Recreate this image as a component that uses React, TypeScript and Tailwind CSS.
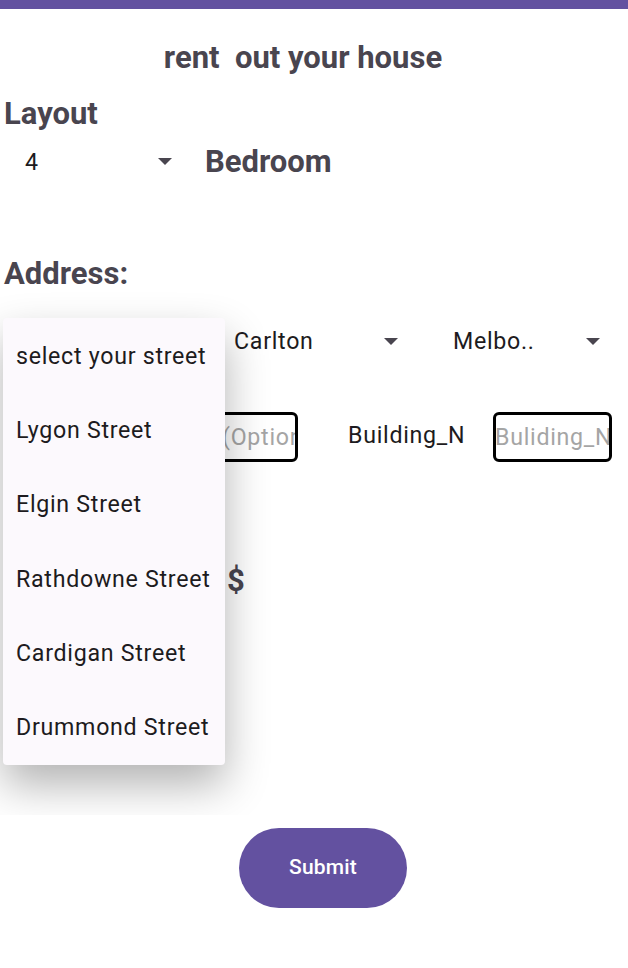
import React from "react";

const Caret = ({ className = "" }: { className?: string }) => (
  <svg width="14" height="8" viewBox="0 0 14 8" className={className}>
    <path d="M0 0 L14 0 L7 7 Z" fill="#49454F" />
  </svg>
);

export default function App() {
  const streets = [
    "select your street",
    "Lygon Street",
    "Elgin Street",
    "Rathdowne Street",
    "Cardigan Street",
    "Drummond Street",
  ];
  const body = "text-[23.2px] tracking-[0.72px] text-[#1D1B20] leading-none whitespace-nowrap";
  return (
    <div
      className="relative w-[628px] h-[968px] bg-white overflow-hidden text-[#49454F]"
      style={{ fontFamily: "Roboto, 'Noto Sans', sans-serif" }}
    >
      <div className="h-[9px] bg-[#6351A0]" />
      <div className="h-[96px] flex items-center justify-center pr-[22px]">
        <h1 className="text-[31px] font-bold whitespace-pre leading-none">rent  out your house</h1>
      </div>
      <div className="pl-[4px] h-[16px] flex items-center">
        <span className="text-[31px] font-bold leading-none">Layout</span>
      </div>
      <div className="h-[83px] flex items-center">
        <div className="w-[200px] flex items-center pl-[25px] pr-[28px] justify-between">
          <span className={body}>4</span>
          <Caret />
        </div>
        <span className="text-[31px] font-bold leading-none ml-[5px] -mt-[2px]">Bedroom</span>
      </div>
      <div className="h-[49px]" />
      <div className="pl-[4px] h-[40px] flex items-center">
        <span className="text-[31px] font-bold leading-none">Address:</span>
      </div>
      <div className="h-[98px] flex items-center">
        <div className="w-[234px]" />
        <div className="w-[219px] flex items-center justify-between pr-[55px]">
          <span className={body}>Carlton</span>
          <Caret />
        </div>
        <div className="w-[175px] flex items-center justify-between pr-[28px]">
          <span className={body}>Melbo..</span>
          <Caret />
        </div>
      </div>
      <div className="h-[92px] flex items-center">
        <div className="w-[216px]" />
        <div className="w-[82px] h-[50px] border-[3px] border-black rounded-[6px] flex items-center pl-[3px] overflow-hidden">
          <span className="text-[23.2px] tracking-[0.72px] text-[#A5A5A5] whitespace-nowrap leading-normal">(Optional)</span>
        </div>
        <div className="ml-[50px] w-[145px]">
          <span className={body}>Building_N</span>
        </div>
        <div className="w-[119px] h-[50px] border-[3px] border-black rounded-[6px] flex items-center overflow-hidden">
          <span className="text-[23.2px] tracking-[0.72px] text-[#A5A5A5] whitespace-nowrap leading-normal -ml-[1px]">Buliding_N</span>
        </div>
      </div>
      <div className="h-[194px] flex items-center pl-[227px]">
        <span className="text-[31px] font-bold leading-none">$</span>
      </div>
      <div className="h-[231px] flex items-end justify-center">
        <button className="w-[168px] h-[80px] rounded-full bg-[#6351A0] text-white text-[21px] tracking-[0.2px] font-medium ml-[18px]">
          Submit
        </button>
      </div>

      {/* dropdown overlay */}
      <div className="absolute left-0 top-0 w-[628px] h-[815px] overflow-hidden pointer-events-none">
        <div className="absolute left-[3px] top-[318px] w-[222px] h-[447px] bg-[#FCF9FD] rounded-[4px] shadow-[0_20px_44px_rgba(0,0,0,0.3)] flex flex-col pt-[1px]">
          {streets.map((s) => (
            <div key={s} className="h-[74.6px] flex items-center pl-[13px]">
              <span className={body}>{s}</span>
            </div>
          ))}
        </div>
      </div>
    </div>
  );
}
